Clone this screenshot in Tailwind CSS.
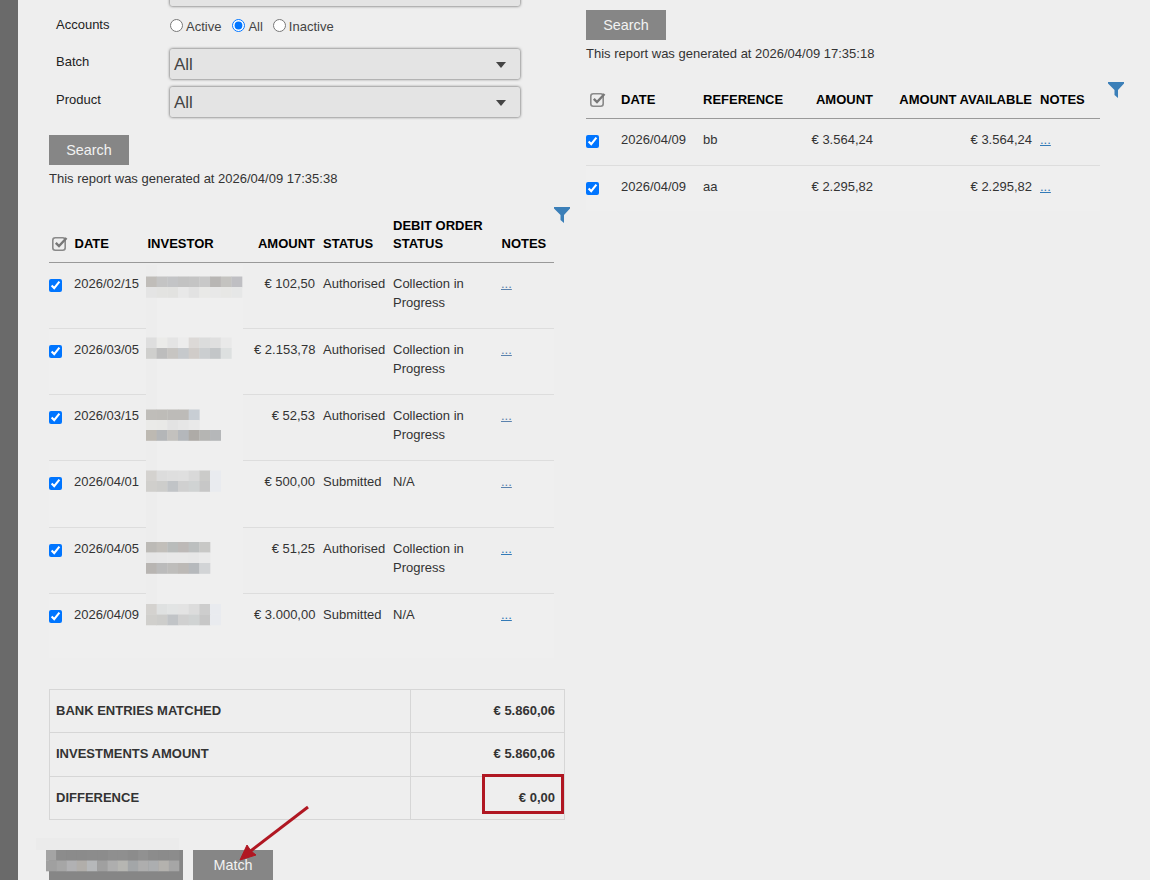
<!DOCTYPE html>
<html lang="en">
<head>
    <meta charset="UTF-8">
    <meta name="viewport" content="width=device-width, initial-scale=1.0">
    <title>Match investments</title>
    <script src="https://cdn.jsdelivr.net/npm/@tailwindcss/browser@4"></script>
</head>
<body class="bg-[#eeeeee] font-['Liberation_Sans',Arial,sans-serif] text-[13px] leading-[19px] text-[#333333]">
<div class="relative flex h-[880px] w-[1150px] overflow-hidden">
    <div class="w-[18px] shrink-0 bg-[#6a6a6a]"></div>

    <!-- investments -->
    <div class="w-[568px] shrink-0 pl-[31px]">
        <div class="-mt-[25px] ml-[121px] h-[31px] w-[350px] rounded-[2px] bg-[#e4e4e4] shadow-[0_0_3px_rgba(0,0,0,0.7)]"></div>

        <div class="flex h-[42px] pl-[7px] text-[#222222]">
            <div class="w-[113px] pt-[10px] leading-[18px]">Accounts</div>
            <div class="flex items-start pt-[12px] leading-[18px] text-[#444444]">
                <input type="radio" name="accounts" class="mt-[1px] ml-[1px]">
                <span class="ml-[3px]">Active</span>
                <input type="radio" name="accounts" class="mt-[1px] ml-[11px]" checked>
                <span class="ml-[3px]">All</span>
                <input type="radio" name="accounts" class="mt-[1px] ml-[10px]">
                <span class="ml-[3px]">Inactive</span>
            </div>
        </div>
        <div class="flex h-[38px] pl-[7px] text-[#222222]">
            <div class="w-[114px] pt-[5px] leading-[18px]">Batch</div>
            <div class="relative mt-[1px] h-[30px] w-[350px] rounded-[2px] bg-[#e4e4e4] pl-[4px] text-[17px] leading-[31px] text-[#444444] shadow-[0_0_3px_rgba(0,0,0,0.7)]">
                All
                <div class="absolute top-[13px] right-[14px] h-0 w-0 border-x-[5px] border-t-[6px] border-x-transparent border-t-[#444444]"></div>
            </div>
        </div>
        <div class="flex h-[38px] pl-[7px] text-[#222222]">
            <div class="w-[114px] pt-[5px] leading-[18px]">Product</div>
            <div class="relative mt-[1px] h-[30px] w-[350px] rounded-[2px] bg-[#e4e4e4] pl-[4px] text-[17px] leading-[31px] text-[#444444] shadow-[0_0_3px_rgba(0,0,0,0.7)]">
                All
                <div class="absolute top-[13px] right-[14px] h-0 w-0 border-x-[5px] border-t-[6px] border-x-transparent border-t-[#444444]"></div>
            </div>
        </div>

        <button class="mt-[11px] block h-[30px] w-[80px] bg-[#868686] text-[14.4px] text-[#f2f2f2]">Search</button>
        <p class="mt-[5px] leading-[18px]">This report was generated at 2026/04/09 17:35:38</p>

        <div class="relative mt-[19px] w-[505px]">
            <svg class="absolute top-0 left-full h-[16px] w-[16px]" viewBox="0 0 16 16"><path d="M0 0H16V1.5L10 8V16L6.5 13V8L0 1.5Z" fill="#3b7fb8"/></svg>
            <table class="w-full table-fixed border-collapse">
                <colgroup>
                    <col class="w-[21px]"><col class="w-[73px]"><col class="w-[107px]"><col class="w-[69px]"><col class="w-[70px]"><col class="w-[108px]"><col class="w-[57px]">
                </colgroup>
                <thead>
                    <tr class="h-[55px] border-b border-[#999999] text-left align-bottom font-bold leading-[18px] text-black">
                        <th class="pb-[10px] pl-[3px]">
                            <svg class="mb-[1px] block h-[15px] w-[16px]" viewBox="0 0 16 15"><rect x="0.8" y="1.8" width="12.4" height="12.4" rx="2.5" fill="none" stroke="#8a8a8a" stroke-width="1.6"/><path d="M3.8 6.8L7 10L14.5 2" fill="none" stroke="#777777" stroke-width="2.4"/></svg>
                        </th>
                        <th class="pr-[4px] pb-[9px] pl-[4.5px]">DATE</th>
                        <th class="pr-[4px] pb-[9px] pl-[4.5px]">INVESTOR</th>
                        <th class="px-[4px] pb-[9px] text-right">AMOUNT</th>
                        <th class="px-[4px] pb-[9px]">STATUS</th>
                        <th class="px-[4px] pb-[9px]">DEBIT ORDER STATUS</th>
                        <th class="pr-[4px] pb-[9px] pl-[4.5px]">NOTES</th>
                    </tr>
                </thead>
                <tbody class="align-top">
                    <tr class="h-[66px] border-b border-[#dddddd]">
                        <td class="pt-[16px]"><input type="checkbox" class="block" checked></td>
                        <td class="px-[4px] pt-[11px]">2026/02/15</td><td></td>
                        <td class="px-[4px] pt-[11px] text-right whitespace-nowrap">€ 102,50</td>
                        <td class="px-[4px] pt-[11px]">Authorised</td>
                        <td class="px-[4px] pt-[11px]">Collection in Progress</td>
                        <td class="px-[4px] pt-[11px]"><a href="#" class="text-[#5b82ad] underline">...</a></td>
                    </tr>
                    <tr class="h-[66px] border-b border-[#dddddd] bg-[#efefef]">
                        <td class="pt-[16px]"><input type="checkbox" class="block" checked></td>
                        <td class="px-[4px] pt-[11px]">2026/03/05</td><td></td>
                        <td class="px-[4px] pt-[11px] text-right whitespace-nowrap">€ 2.153,78</td>
                        <td class="px-[4px] pt-[11px]">Authorised</td>
                        <td class="px-[4px] pt-[11px]">Collection in Progress</td>
                        <td class="px-[4px] pt-[11px]"><a href="#" class="text-[#5b82ad] underline">...</a></td>
                    </tr>
                    <tr class="h-[66px] border-b border-[#dddddd]">
                        <td class="pt-[16px]"><input type="checkbox" class="block" checked></td>
                        <td class="px-[4px] pt-[11px]">2026/03/15</td><td></td>
                        <td class="px-[4px] pt-[11px] text-right whitespace-nowrap">€ 52,53</td>
                        <td class="px-[4px] pt-[11px]">Authorised</td>
                        <td class="px-[4px] pt-[11px]">Collection in Progress</td>
                        <td class="px-[4px] pt-[11px]"><a href="#" class="text-[#5b82ad] underline">...</a></td>
                    </tr>
                    <tr class="h-[67px] border-b border-[#dddddd] bg-[#efefef]">
                        <td class="pt-[16px]"><input type="checkbox" class="block" checked></td>
                        <td class="px-[4px] pt-[11px]">2026/04/01</td><td></td>
                        <td class="px-[4px] pt-[11px] text-right whitespace-nowrap">€ 500,00</td>
                        <td class="px-[4px] pt-[11px]">Submitted</td>
                        <td class="px-[4px] pt-[11px]">N/A</td>
                        <td class="px-[4px] pt-[11px]"><a href="#" class="text-[#5b82ad] underline">...</a></td>
                    </tr>
                    <tr class="h-[66px] border-b border-[#dddddd]">
                        <td class="pt-[16px]"><input type="checkbox" class="block" checked></td>
                        <td class="px-[4px] pt-[11px]">2026/04/05</td><td></td>
                        <td class="px-[4px] pt-[11px] text-right whitespace-nowrap">€ 51,25</td>
                        <td class="px-[4px] pt-[11px]">Authorised</td>
                        <td class="px-[4px] pt-[11px]">Collection in Progress</td>
                        <td class="px-[4px] pt-[11px]"><a href="#" class="text-[#337ab7] underline">...</a></td>
                    </tr>
                    <tr class="h-[65px] bg-[#efefef]">
                        <td class="pt-[16px]"><input type="checkbox" class="block" checked></td>
                        <td class="px-[4px] pt-[11px]">2026/04/09</td><td></td>
                        <td class="px-[4px] pt-[11px] text-right whitespace-nowrap">€ 3.000,00</td>
                        <td class="px-[4px] pt-[11px]">Submitted</td>
                        <td class="px-[4px] pt-[11px]">N/A</td>
                        <td class="px-[4px] pt-[11px]"><a href="#" class="text-[#337ab7] underline">...</a></td>
                    </tr>
                </tbody>
            </table>
        </div>

        <table class="mt-[31px] w-[515px] table-fixed border-collapse font-bold">
            <colgroup><col class="w-[361px]"><col class="w-[154px]"></colgroup>
            <tbody>
                <tr class="h-[43px]"><td class="border border-[#d6d6d6] pb-[2px] pl-[6px]">BANK ENTRIES MATCHED</td><td class="border border-[#d6d6d6] pr-[9px] pb-[2px] text-right">€ 5.860,06</td></tr>
                <tr class="h-[44px]"><td class="border border-[#d6d6d6] pb-[2px] pl-[6px]">INVESTMENTS AMOUNT</td><td class="border border-[#d6d6d6] pr-[9px] pb-[2px] text-right">€ 5.860,06</td></tr>
                <tr class="h-[43px]"><td class="border border-[#d6d6d6] pb-[2px] pl-[6px]">DIFFERENCE</td><td class="border border-[#d6d6d6] pr-[9px] pb-[2px] text-right">€ 0,00</td></tr>
            </tbody>
        </table>

        <div class="mt-[30px] flex gap-[10px]">
            <button class="h-[30px] w-[134px] bg-[#868686]" aria-label="Hidden action"></button>
            <button class="h-[30px] w-[80px] bg-[#868686] text-[14.4px] text-[#f2f2f2]">Match</button>
        </div>
    </div>

    <!-- bank entries -->
    <div class="w-[514px] shrink-0 pt-[10px]">
        <button class="block h-[30px] w-[80px] bg-[#868686] text-[14.4px] text-[#f2f2f2]">Search</button>
        <p class="mt-[5px] leading-[18px]">This report was generated at 2026/04/09 17:35:18</p>

        <div class="relative mt-[17px] w-[514px]">
            <svg class="absolute top-[2px] left-[calc(100%+8px)] h-[16px] w-[16px]" viewBox="0 0 16 16"><path d="M0 0H16V1.5L10 8V16L6.5 13V8L0 1.5Z" fill="#3b7fb8"/></svg>
            <table class="w-full table-fixed border-collapse">
                <colgroup>
                    <col class="w-[31px]"><col class="w-[82px]"><col class="w-[91px]"><col class="w-[87px]"><col class="w-[159px]"><col class="w-[64px]">
                </colgroup>
                <thead>
                    <tr class="h-[38px] border-b border-[#999999] text-left align-bottom font-bold leading-[18px] text-black">
                        <th class="pb-[10px] pl-[4px]">
                            <svg class="mb-[1px] block h-[15px] w-[16px]" viewBox="0 0 16 15"><rect x="0.8" y="1.8" width="12.4" height="12.4" rx="2.5" fill="none" stroke="#8a8a8a" stroke-width="1.6"/><path d="M3.8 6.8L7 10L14.5 2" fill="none" stroke="#777777" stroke-width="2.4"/></svg>
                        </th>
                        <th class="px-[4px] pb-[9px]">DATE</th>
                        <th class="px-[4px] pb-[9px]">REFERENCE</th>
                        <th class="px-[4px] pb-[9px] text-right">AMOUNT</th>
                        <th class="px-[4px] pb-[9px] text-right">AMOUNT AVAILABLE</th>
                        <th class="px-[4px] pb-[9px]">NOTES</th>
                    </tr>
                </thead>
                <tbody class="align-top">
                    <tr class="h-[47px] border-b border-[#dddddd]">
                        <td class="pt-[16px]"><input type="checkbox" class="block" checked></td>
                        <td class="px-[4px] pt-[11px]">2026/04/09</td>
                        <td class="px-[4px] pt-[11px]">bb</td>
                        <td class="px-[4px] pt-[11px] text-right whitespace-nowrap">€ 3.564,24</td>
                        <td class="px-[4px] pt-[11px] text-right whitespace-nowrap">€ 3.564,24</td>
                        <td class="px-[4px] pt-[11px]"><a href="#" class="text-[#337ab7] underline">...</a></td>
                    </tr>
                    <tr class="h-[46px] bg-[#efefef]">
                        <td class="pt-[16px]"><input type="checkbox" class="block" checked></td>
                        <td class="px-[4px] pt-[11px]">2026/04/09</td>
                        <td class="px-[4px] pt-[11px]">aa</td>
                        <td class="px-[4px] pt-[11px] text-right whitespace-nowrap">€ 2.295,82</td>
                        <td class="px-[4px] pt-[11px] text-right whitespace-nowrap">€ 2.295,82</td>
                        <td class="px-[4px] pt-[11px]"><a href="#" class="text-[#337ab7] underline">...</a></td>
                    </tr>
                </tbody>
            </table>
        </div>
    </div>

    <!-- redaction mosaics and the red annotations drawn on top of the screenshot -->
    <svg id="overlay" class="pointer-events-none absolute top-0 left-0" width="1150" height="880" viewBox="0 0 1150 880" xmlns="http://www.w3.org/2000/svg">
        <rect x="146" y="265" width="97" height="360" fill="#efefef"/>
        <rect x="146" y="265" width="11" height="360" fill="#ededed"/>
        <rect x="36" y="838" width="143" height="12" fill="#ebebeb"/>
        <g id="mosaics"></g>
        <rect x="483.5" y="775.5" width="79" height="37" fill="none" stroke="#b01722" stroke-width="3"/>
        <path d="M308 807L248 853" stroke="#b01722" stroke-width="3" fill="none"/>
        <path d="M240 860L247 845L251 851L256 855Z" fill="#b01722" stroke="#b01722" stroke-width="1"/>
    </svg>
</div>

<script>
    // x, y, block size, then one list of colours per row
    const mosaics = [
        [146, 276.5, 10.67, 10.5, ['#c0bdb9 #c4c4c4 #c3c4c6 #c2c2c2 #c4c4c4 #c8c8c8 #b8b6b4 #c4c3c0 #bfbfc3', '#e4e4e4 #e3e3e1 #e2e2e0 #e8e8e8 #e2e2e2 #e9e9e7 #e8e8e8 #e7e7e5 #e6e7e7']],
        [146, 337.5, 10.67, 10.5, ['#dedede #ebebe9 #e4e4e4 #ececec #dcd9d7 #dbdcdc #dfdfdf #e9e9e9', '#cfcfcd #bdbdbd #c7c5c2 #c6c9cc #d0ccc9 #cbced0 #c3c6c8 #dde0e0']],
        [146, 409.5, 10.67, 10.5, ['#bfbdb9 #bebcb8 #bdbbb8 #bdbbb8 #c8ced4', '#eaeae8 #e9e9e7 #e3e3e3 #e6e6e6 #e9e9e9']],
        [146, 430, 10.67, 10.5, ['#bdb9b2 #b4b6b8 #c3c1be #b4b7bb #aeaba7 #b5b5b3 #b5b7b9']],
        [146, 470.5, 10.67, 10.5, ['#d4d2cf #dcdcdc #dedede #dfdfdf #d9d9d9 #cbcbc9 #e9ebef', '#d0cfcc #cdcdcb #c1c4c7 #d0d0d0 #d0d3d3 #c7c7c7 #e9ebef']],
        [146, 542, 10.67, 10.5, ['#bcbab6 #c2bfba #b9bcbb #bdb9b7 #bcbfbf #c8c8c6', '#e6e6e6 #e7e7e7 #e8e8e8 #e8e8e8 #e7e7e7 #eaeaea']],
        [146, 563, 10.67, 10.5, ['#b8b5b2 #bbbbbb #bebdbb #bcb9b6 #b6b9bc #d2d4d6']],
        [146, 604, 10.67, 10.5, ['#d4d2cf #dfe1e1 #e2e4e4 #e3e3e3 #dcdcdc #cdcdcd #e9ebef', '#d0cfcc #cdcdcb #c1c4c7 #d0d0d0 #d0d3d3 #c7c7c7 #e9ebef']],
        [46, 850, 10.23, 10.5, ['#a4a4a4 #8c8c8c #8b8b8b #8b8b8b #8c8c8c #8c8c8c #8f8f8f #8f8f8f #8c8c8c #919191 #8c8c8c #8b8b8b #8c8c8c', '#a0a0a0 #a6a6a6 #b1b1b3 #b1aeaa #b6b8ba #a0a0a0 #aeaeae #b6b6b2 #a3a6a8 #aeaeae #acaeb0 #b4b2ae #a6a6a6']]
    ];
    const group = document.getElementById('mosaics');
    mosaics.forEach(([x, y, w, h, rows]) => {
        rows.forEach((row, r) => {
            row.split(' ').forEach((colour, c) => {
                const rect = document.createElementNS('http://www.w3.org/2000/svg', 'rect');
                rect.setAttribute('x', x + c * w);
                rect.setAttribute('y', y + r * h);
                rect.setAttribute('width', w + 0.3);
                rect.setAttribute('height', h + 0.3);
                rect.setAttribute('fill', colour);
                group.appendChild(rect);
            });
        });
    });
</script>
</body>
</html>
